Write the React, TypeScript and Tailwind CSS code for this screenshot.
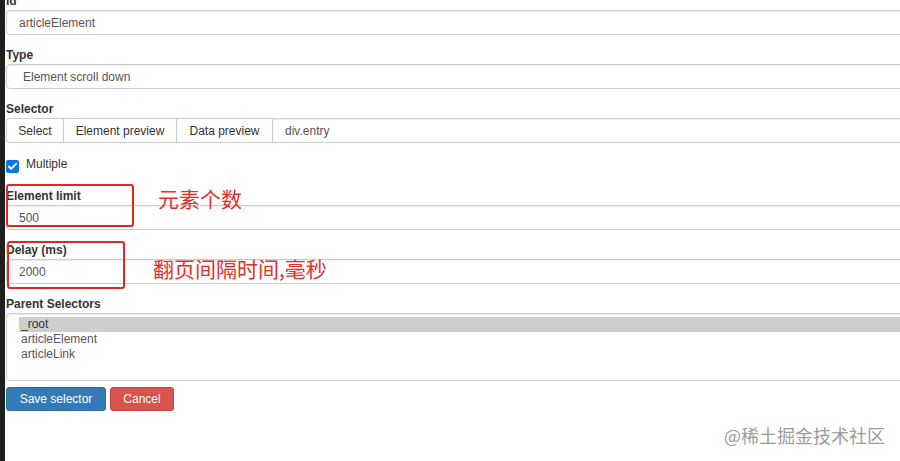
import { Check } from 'lucide-react'

const labelCls = 'block h-[17px] leading-[19px] mb-[1px] text-[12px] font-bold text-[#333]'
const inputCls =
  'h-[25px] w-full flex items-center border border-[#ccc] rounded-[4px] bg-white text-[12px] text-[#555] shadow-[inset_0_1px_1px_rgba(0,0,0,0.075)]'

function Field({ label, value, first, indent }: { label: string; value: string; first?: boolean; indent?: boolean }) {
  return (
    <div className={first ? '-mt-[8px]' : 'mt-[11px]'}>
      <label className={labelCls}>{label}</label>
      <div className={inputCls}>
        <span className={indent ? 'pl-[16px]' : 'pl-[12px]'}>{value}</span>
      </div>
    </div>
  )
}

export default function App() {
  return (
    <div
      className="relative w-[900px] h-[461px] overflow-hidden bg-white flex"
      style={{ fontFamily: '"Liberation Sans", Arial, sans-serif' }}
    >
      {/* dark window edge */}
      <div className="w-[5px] shrink-0 bg-[#1f1f1f]" />

      <div className="pl-[1px] w-[930px] shrink-0 flex flex-col">
        <Field label="Id" value="articleElement" first />
        <Field label="Type" value="Element scroll down" indent />

        {/* Selector */}
        <div className="mt-[11px]">
          <label className={labelCls}>Selector</label>
          <div className="flex h-[25px] text-[12px]">
            <button className="w-[57px] shrink-0 border border-r-0 border-[#ccc] rounded-l-[4px] bg-white text-[#333]">Select</button>
            <button className="w-[113px] shrink-0 border border-r-0 border-[#ccc] bg-white text-[#333]">Element preview</button>
            <button className="w-[96px] shrink-0 border border-r-0 border-[#ccc] bg-white text-[#333]">Data preview</button>
            <div className="grow flex items-center border border-[#ccc] bg-white text-[#555] pl-[12px] shadow-[inset_0_1px_1px_rgba(0,0,0,0.075)]">
              div.entry
            </div>
          </div>
        </div>

        {/* Multiple */}
        <div className="mt-[11px] flex items-start h-[19px]">
          <span className="mt-[6px] w-[13px] h-[13px] rounded-[2px] bg-[#0b76e6] flex items-center justify-center">
            <Check className="w-[11px] h-[11px] text-white" strokeWidth={4} />
          </span>
          <span className="ml-[7px] mt-[2px] text-[12px] leading-[17px] text-[#333]">Multiple</span>
        </div>

        <div className="mt-[14px]">
          <label className={labelCls}>Element limit</label>
          <div className={inputCls}>
            <span className="pl-[12px]">500</span>
          </div>
        </div>
        <Field label="Delay (ms)" value="2000" />

        {/* Parent selectors */}
        <div className="mt-[11px]">
          <label className={labelCls}>Parent Selectors</label>
          <div className="h-[68px] border border-[#ccc] rounded-[4px] bg-white pt-[3px] pl-[12px] text-[12px] text-[#555] shadow-[inset_0_1px_1px_rgba(0,0,0,0.075)]">
            <div className="h-[15px] leading-[15px] pl-[2px] bg-[#cecece] text-[#333]">_root</div>
            <div className="h-[15px] leading-[15px] pl-[2px]">articleElement</div>
            <div className="h-[15px] leading-[15px] pl-[2px]">articleLink</div>
          </div>
        </div>

        <div className="mt-[6px] flex gap-[4px] text-[12px]">
          <button className="w-[100px] h-[24px] rounded-[3px] border border-[#2e6da4] bg-[#337ab7] text-white">Save selector</button>
          <button className="w-[64px] h-[24px] rounded-[3px] border border-[#d43f3a] bg-[#d9534f] text-white">Cancel</button>
        </div>
      </div>

      {/* annotations */}
      <div className="absolute left-[6px] top-[184px] w-[128px] h-[43px] border-2 border-[#e42525] rounded-[3px]" />
      <div className="absolute left-[7px] top-[241px] w-[118px] h-[48px] border-2 border-[#e42525] rounded-[3px]" />
      <div
        className="absolute left-[158px] top-[188px] text-[21px] leading-[21px] text-[#e2302b]"
        style={{ fontFamily: '"Noto Sans CJK SC", sans-serif' }}
      >
        元素个数
      </div>
      <div
        className="absolute left-[153px] top-[258px] text-[21px] leading-[21px] text-[#e2302b]"
        style={{ fontFamily: '"Noto Sans CJK SC", sans-serif' }}
      >
        翻页间隔时间,毫秒
      </div>

      {/* watermark */}
      <div
        className="absolute left-[724px] top-[425px] text-[18px] leading-[20px] text-[#9c9c9c]"
        style={{ fontFamily: '"Noto Sans CJK SC", sans-serif' }}
      >
        @稀土掘金技术社区
      </div>
    </div>
  )
}
